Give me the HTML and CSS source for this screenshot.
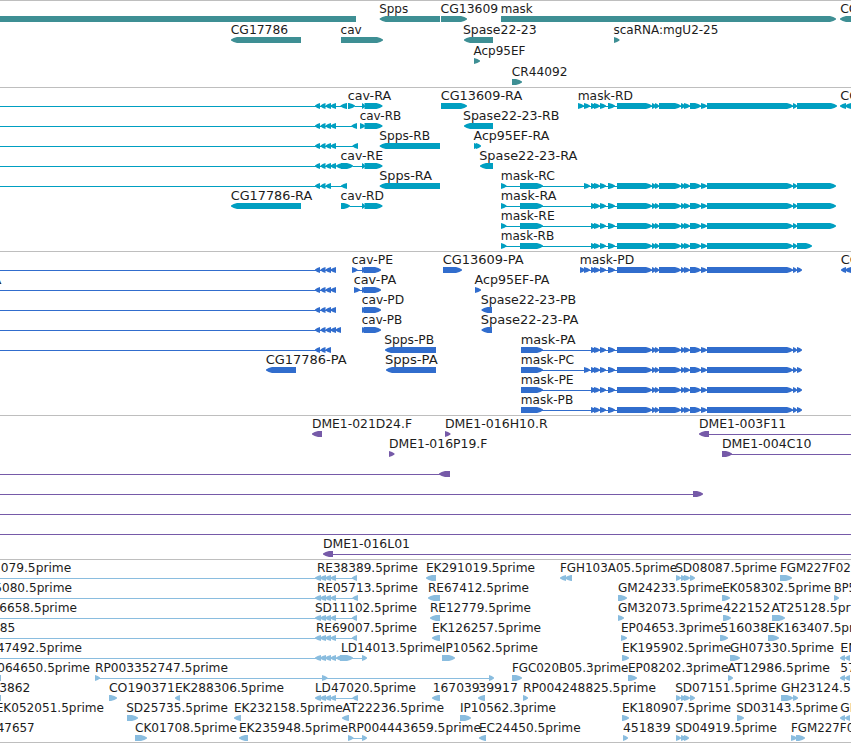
FILE: index.html
```html
<!DOCTYPE html>
<html lang="en">
<head>
    <meta charset="UTF-8">
    <meta name="viewport" content="width=device-width, initial-scale=1.0">
    <title>Genome Browser</title>
    <link rel="stylesheet" href="styles.css">
</head>
<body>
    <main class="browser" id="browser"></main>
    <script src="tracks.js"></script>
</body>
</html>
```
FILE: styles.css
```css
body {
    margin: 0;
    background-color: #fff;
    overflow: hidden;
}

.browser {
    display: flex;
    flex-direction: column;
    width: 851px;
    border-bottom: 1px solid #bebebe;
}

.track {
    border-top: 1px solid #bebebe;
}

.track svg {
    display: block;
    width: 100%;
    overflow: hidden;
}

.label {
    font-family: "DejaVu Sans", sans-serif;
    font-size: 12px;
    fill: #1c1c1c;
}

.gene {
    fill: #3e8f94;
}

.transcript {
    fill: #009fc1;
}

.cds {
    fill: #316dcd;
}

.clone {
    fill: #765aa8;
}

.est {
    fill: #8abddf;
}
```
FILE: tracks.js
```javascript
// parts: ">" forward exon, "<" reverse exon, "=" plain bar, "-" intron line
const INTRONS = '-0:336 <315:320 <320.5:325.5 <325.5:331 <330.5:336';
const INTRONS_SHORT = '-0:331 <315:320 <320.5:325.5 <325.5:331';
const CAV = '>362:365 >364.5:382.5';
const CAV_CDS = '>362:365 >363.5:381';
const MASK_CORE = '>591:596 >594:600 >600:606 >608:615 >617:652 >652:656 >655:659 >659:681 >681:685 >684:690 >690:701 >701:707 >707:793 >793:797';
const EST_LEFT = '<315:321 <320:326 <325:331 <330.5:336';
const SD_SPLIT = '>676:681 >681:686 >684:690 >690:695';

const tracks = [
    { type: 'gene', rowHeight: 21, height: 86, rows: [
        [[['Spps', 380, 407.5], ['CG13609', 441.3, 497.5], ['mask', 501.5, 532], ['CG31134', 841, 897]],
            '=0:356 <379.7:440 >441:467 >501:836 <840:860'],
        [[['CG17786', 231.5, 287.5], ['cav', 341.3, 361], ['Spase22-23', 463.7, 536], ['scaRNA:mgU2-25', 614.3, 717.7]],
            '<231:301 >341:383 <464:493 >614:619.5'],
        [[['Acp95EF', 474.3, 524.7]], '>474:480'],
        [[['CR44092', 512.5, 566.7]], '>512:522']
    ]},
    { type: 'transcript', rowHeight: 20, height: 163, rows: [
        [[['cav-RA', 348.5, 390.5], ['CG13609-RA', 441.5, 521.5], ['mask-RD', 578.5, 632.3], ['CG31134-RA', 841, 921]],
            `${INTRONS} -336:341 <340.5:347 >348:355 -355:363 ${CAV} >441:467 -578:830 >578:584 >584:590 ${MASK_CORE} >797:837 <840:846 <845:860`],
        [[['cav-RB', 360.5, 400.5], ['Spase22-23-RB', 463.7, 558.7]],
            `${INTRONS} -336:352 <351.5:357 >360:365 >364.5:382.5 <464:493`],
        [[['Spps-RB', 380, 429.5], ['Acp95EF-RA', 474.3, 548.7]],
            `${INTRONS} -336:353 <352.5:358 <379.7:440 >474:479 >476:481`],
        [[['cav-RE', 341.3, 382.3], ['Spase22-23-RA', 480, 576.7]],
            `${INTRONS} <336:345 >341:353 -353:363 ${CAV} <480:493`],
        [[['Spps-RA', 380, 431.3], ['mask-RC', 501.5, 554.3]],
            `${INTRONS_SHORT} -331:342 <341:347 <379.7:440 -501:830 >501:506.5 >520:543 >584:590 ${MASK_CORE} >797:836`],
        [[['CG17786-RA', 231.5, 311.5], ['cav-RD', 341.3, 383.3], ['mask-RA', 501.5, 555.7]],
            `<231:301 >341:350 -350:363 ${CAV} -501:830 >501:506.5 >520:543 ${MASK_CORE} >797:836`],
        [[['mask-RE', 501.5, 554]], `-501:830 >501:506.5 >520:543 ${MASK_CORE} >797:836`],
        [[['mask-RB', 501.5, 553.5]], `-501:805 >501:506.5 >520:543 ${MASK_CORE} >797:812`]
    ]},
    { type: 'cds', rowHeight: 20, height: 163, rows: [
        [[['cav-PE', 352.5, 392.3], ['CG13609-PA', 443.5, 523], ['mask-PD', 580.5, 633.5], ['CG31134-PA', 841.5, 921]],
            `${INTRONS} >352:357.5 -357:363 ${CAV_CDS} >443:462 -580:797 >580:585 >584:590 ${MASK_CORE} >797:802 <841:846 <845:860`],
        [[['PA', -15, 0.8], ['cav-PA', 354.5, 395.5], ['Acp95EF-PA', 475.3, 548.7]],
            `${INTRONS} >354:360 -359:363 ${CAV_CDS} >475:481`],
        [[['cav-PD', 362.5, 403.5], ['Spase22-23-PB', 481.5, 575.5]], `${INTRONS} ${CAV_CDS} <481.5:492`],
        [[['cav-PB', 362.5, 401.5], ['Spase22-23-PA', 481.5, 577.7]], `${INTRONS} <335.5:341 ${CAV_CDS} <481.5:492`],
        [[['Spps-PB', 385, 433.5], ['mask-PA', 521.5, 575]],
            `${INTRONS_SHORT} <385:436 -521:797 >521:543 ${MASK_CORE} >797:802`],
        [[['CG17786-PA', 266.5, 346], ['Spps-PA', 385.7, 437], ['mask-PC', 521.5, 573.5]],
            `<266:296 <386:436 -521:797 >521:543 >584:590 ${MASK_CORE} >797:802`],
        [[['mask-PE', 521.5, 573]], `-521:797 >521:543 ${MASK_CORE} >797:802`],
        [[['mask-PB', 521.5, 572.5]], `-521:797 >521:543 ${MASK_CORE} >797:802`]
    ]},
    { type: 'clone', rowHeight: 20, height: 143, rows: [
        [[['DME1-021D24.F', 312.7, 411.3], ['DME1-016H10.R', 445.7, 547], ['DME1-003F11', 699.7, 785.5]],
            '<312:322 >445:450.5 <699:709 -709:851'],
        [[['DME1-016P19.F', 389.7, 486.7], ['DME1-004C10', 722.7, 810.7]], '>389:394.5 >722:732 -730:851'],
        [[], '-0:442 <439:450'],
        [[], '-0:693 >693:703'],
        [[], '-0:851'],
        [[], '-0:851'],
        [[['DME1-016L01', 323.7, 409.3]], '<323:333 -333:851']
    ]},
    { type: 'est', rowHeight: 20, height: 182, rows: [
        [[['079.5prime', 1.5, 70.5], ['RE38389.5prime', 317.7, 417.3], ['EK291019.5prime', 426.7, 534.3], ['FGH103A05.5prime', 560.7, 676.5], ['SD08087.5prime', 676, 776.3], ['FGM227F02.5prime', 780.7, 896]],
            `-0:353 ${EST_LEFT} <352:357 <426:436 <560:566 <565:572 ${SD_SPLIT} >780:792`],
        [[['5080.5prime', -5, 71.3], ['RE05713.5prime', 317.7, 417.3], ['RE67412.5prime', 428.7, 528.3], ['GM24233.5prime', 618.7, 722], ['EK058302.5prime', 722.7, 830.3], ['BP5', 834.7, 855]],
            `-0:353 ${EST_LEFT} <352.5:358 <428:440 >618:627 >722:730 >834:839`],
        [[['6658.5prime', 0, 76.3], ['SD11102.5prime', 315.7, 416.3], ['RE12779.5prime', 430.7, 530.3], ['GM32073.5prime', 618.7, 722], ['422152', 723.7, 769.7], ['AT25128.5prime', 772.3, 873]],
            `-0:353 ${EST_LEFT} <352:357 <430:440 >618:624 >723:731 >772:785`],
        [[['85', 0.5, 14.5], ['RE69007.5prime', 316.7, 416.3], ['EK126257.5prime', 432.7, 540.3], ['EP04653.3prime', 621.7, 720.7], ['516038', 721, 767.7], ['EK163407.5prime', 768.7, 876]],
            `-0:353 ${EST_LEFT} <352:357 <432:440 >621:627 >720:728 >768:779`],
        [[['47492.5prime', -2.5, 81.3], ['LD14013.5prime', 341.7, 441.7], ['IP10562.5prime', 442.7, 537.3], ['EK195902.5prime', 622.7, 730.3], ['GH07330.5prime', 730.7, 833.3], ['EN', 841, 857]],
            `-0:362 ${EST_LEFT} <336:345 >340:353 >362:367 >442:455 >622:629 >730:740 <840:845 <845:850`],
        [[['064650.5prime', -2, 89.3], ['RP003352747.5prime', 95.7, 227.3], ['FGC020B05.3prime', 512.7, 627.7], ['EP08202.3prime', 628.7, 727.7], ['AT12986.5prime', 728.3, 829.3], ['57', 841, 855]],
            '=0:1 -95:490 >95:100 >322:327.5 >489:494 >512:522 >628:637 >728:733 <840:845 <845:850'],
        [[['3862', 0, 29.7], ['CO190371', 109.7, 174.3], ['EK288306.5prime', 175.7, 283.3], ['LD47020.5prime', 315.7, 415.3], ['167039', 433.5, 479], ['39917', 479, 517.3], ['RP004248825.5prime', 523.7, 655.3], ['SD07151.5prime', 676, 776.3], ['GH23124.5prime', 781.7, 886]],
            `=0:1 >109:117 <175:180 -320:353 ${EST_LEFT} <352.5:358 <432:440 <478:485 >523:528 ${SD_SPLIT} >781:793 >793:798`],
        [[['EK052051.5prime', -3.5, 103.3], ['SD25735.5prime', 127, 227.3], ['EK232158.5prime', 234.7, 342], ['AT22236.5prime', 343, 443.3], ['IP10562.3prime', 460.7, 555.3], ['EK180907.5prime', 622.7, 730.3], ['SD03143.5prime', 737, 837.3], ['GH2', 841, 866]],
            '>127:138 <234:241 <342:349 >460:471 >622:629 >737:744 <840:845 <845:850'],
        [[['47657', -2.5, 34], ['CK01708.5prime', 135.7, 236.3], ['EK235948.5prime', 239.7, 347.3], ['RP004443659.5prime', 348.7, 480.3], ['EC24450.5prime', 479.7, 580], ['451839', 623.7, 670], ['SD04919.5prime', 676, 776.3], ['FGM227F02.5prime', 791.7, 907]],
            '>135:147 <239:248 -348:364 >348:353.5 >362:367 <479:486 >623:628 >676:681 >681:686 >684:689 >791:797 >796:805']
    ]}
];

const SVG_NS = 'http://www.w3.org/2000/svg';

function svgElement(name, attrs) {
    const el = document.createElementNS(SVG_NS, name);
    for (const key in attrs) {
        el.setAttribute(key, attrs[key]);
    }
    return el;
}

// Draws one bar, arrow or line of a feature
function drawPart(part, y, type) {
    const kind = part[0];
    const [start, end] = part.slice(1).split(':').map(Number);
    if (kind === '-') {
        return svgElement('rect', { class: type, x: start, y: y + 3, width: end - start, height: 1 });
    }
    if (kind === '=') {
        return svgElement('rect', { class: type, x: start, y: y, width: end - start, height: 6 });
    }
    const dir = kind === '>' ? 1 : -1;
    const tip = Math.min(6, end - start) * dir;
    const base = kind === '>' ? start : end;
    const point = kind === '>' ? end : start;
    const neck = point - tip;
    const mid = point - tip * 0.45;
    return svgElement('path', {
        class: type,
        d: `M${base} ${y}H${neck}L${mid} ${y + 1}L${point} ${y + 2.6}V${y + 3.6}L${mid} ${y + 5}L${neck} ${y + 6}H${base}Z`
    });
}

function drawTrack(track) {
    const section = document.createElement('section');
    section.className = 'track';
    const svg = svgElement('svg', { height: track.height });

    track.rows.forEach(([labels, parts], i) => {
        const top = i * track.rowHeight;
        parts.split(' ').forEach(part => svg.appendChild(drawPart(part, top + 15, track.type)));
        labels.forEach(([name, start, end]) => {
            const text = svgElement('text', {
                class: 'label',
                x: start - 0.8,
                y: top + 12,
                textLength: end - start + 1.5,
                lengthAdjust: 'spacingAndGlyphs'
            });
            text.textContent = name;
            svg.appendChild(text);
        });
    });

    section.appendChild(svg);
    return section;
}

const browser = document.getElementById('browser');
tracks.forEach(track => browser.appendChild(drawTrack(track)));
```
